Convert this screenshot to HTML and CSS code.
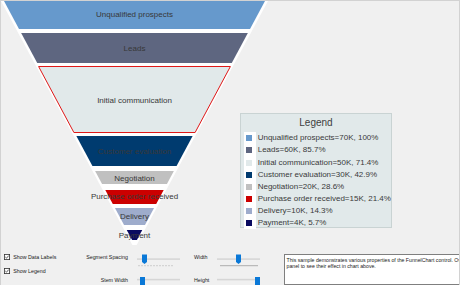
FILE: index.html
```html
<!DOCTYPE html>
<html>
<head>
<meta charset="utf-8">
<link rel="stylesheet" href="styles.css">
</head>
<body>
<div class="window">
  <div class="chart">
    <svg class="funnel" width="458" height="244" viewBox="1 1 458 244">
      <polygon points="1,1 268,1 134.5,249" fill="#ffffff"/>
      <polygon points="4,1 265,1 250,29 19,29" fill="#6699cc"/>
      <polygon points="21.15,33 247.85,33 231.77,63 37.23,63" fill="#5e6680"/>
      <polygon points="38.6,66.5 230.4,66.5 195.1,132.5 73.9,132.5" fill="#e1e9ea" stroke="#e01818" stroke-width="1"/>
      <polygon points="76.36,136 192.64,136 176.56,166 92.44,166" fill="#003b6f"/>
      <polygon points="95.12,171 173.88,171 166.91,184 102.09,184" fill="#c0c0c0"/>
      <polygon points="105.3,190 163.7,190 156.19,204 112.81,204" fill="#cc0000"/>
      <polygon points="114.95,208 154.05,208 144.94,225 124.06,225" fill="#9eaccc"/>
      <polygon points="126.74,230 142.26,230 136.9,240 132.1,240" fill="#0a0a60"/>
      <g class="seg-labels">
        <text x="134.5" y="17">Unqualified prospects</text>
        <text x="134.5" y="51">Leads</text>
        <text x="134.5" y="103">Initial communication</text>
        <text x="134.5" y="154">Customer evaluation</text>
        <text x="134.5" y="180.5">Negotiation</text>
        <text x="134.5" y="199">Purchase order received</text>
        <text x="134.5" y="219">Delivery</text>
        <text x="134.5" y="238">Payment</text>
      </g>
    </svg>
    <div class="legend">
      <div class="legend-title">Legend</div>
      <ul class="legend-list">
        <li class="legend-item"><span class="sw-cell"><span class="sw c1"></span></span><span class="legend-text">Unqualified prospects=70K, 100%</span></li>
        <li class="legend-item"><span class="sw-cell"><span class="sw c2"></span></span><span class="legend-text">Leads=60K, 85.7%</span></li>
        <li class="legend-item"><span class="sw-cell"><span class="sw c3"></span></span><span class="legend-text">Initial communication=50K, 71.4%</span></li>
        <li class="legend-item"><span class="sw-cell"><span class="sw c4"></span></span><span class="legend-text">Customer evaluation=30K, 42.9%</span></li>
        <li class="legend-item"><span class="sw-cell"><span class="sw c5"></span></span><span class="legend-text">Negotiation=20K, 28.6%</span></li>
        <li class="legend-item"><span class="sw-cell"><span class="sw c6"></span></span><span class="legend-text">Purchase order received=15K, 21.4%</span></li>
        <li class="legend-item"><span class="sw-cell"><span class="sw c7"></span></span><span class="legend-text">Delivery=10K, 14.3%</span></li>
        <li class="legend-item"><span class="sw-cell"><span class="sw c8"></span></span><span class="legend-text">Payment=4K, 5.7%</span></li>
      </ul>
    </div>
  </div>
  <div class="controls">
    <div class="checks">
      <label class="check">
        <svg class="box" width="6" height="6" viewBox="0 0 6 6"><rect x="0.4" y="0.4" width="5.2" height="5.2" fill="#fff" stroke="#333" stroke-width="0.8"/><path d="M1.3 3 L2.5 4.2 L4.7 1.6" fill="none" stroke="#333" stroke-width="0.8"/></svg>
        <span class="check-text">Show Data Labels</span>
      </label>
      <label class="check">
        <svg class="box" width="6" height="6" viewBox="0 0 6 6"><rect x="0.4" y="0.4" width="5.2" height="5.2" fill="#fff" stroke="#333" stroke-width="0.8"/><path d="M1.3 3 L2.5 4.2 L4.7 1.6" fill="none" stroke="#333" stroke-width="0.8"/></svg>
        <span class="check-text">Show Legend</span>
      </label>
    </div>
    <div class="ctl-label lbl-a r1">Segment Spacing</div>
    <svg class="slider s-a r1" width="43" height="13" viewBox="0 0 43 13">
      <rect x="0" y="4.3" width="43" height="1.6" fill="#d6d6d6"/>
      <line x1="1" y1="11.7" x2="36" y2="11.7" stroke="#c4c4c4" stroke-width="0.8" stroke-dasharray="2 1"/>
      <path d="M5 0.5 H10 V8 L7.5 10 L5 8 Z" fill="#0a78d7"/>
    </svg>
    <div class="ctl-label lbl-b r1">Width</div>
    <svg class="slider s-b r1" width="43" height="13" viewBox="0 0 43 13">
      <rect x="0" y="4.3" width="43" height="1.6" fill="#d6d6d6"/>
      <line x1="3" y1="11.7" x2="41" y2="11.7" stroke="#9c9c9c" stroke-width="0.8"/>
      <path d="M19 0.5 H24 V8 L21.5 10 L19 8 Z" fill="#0a78d7"/>
    </svg>
    <div class="ctl-label lbl-a r2">Stem Width</div>
    <svg class="slider-low s-a r2" width="43" height="8" viewBox="0 0 43 8">
      <rect x="0" y="1.8" width="43" height="1.6" fill="#d6d6d6"/>
      <rect x="3" y="0" width="5" height="8" fill="#0a78d7"/>
    </svg>
    <div class="ctl-label lbl-b r2">Height</div>
    <svg class="slider-low s-b r2" width="43" height="8" viewBox="0 0 43 8">
      <rect x="0" y="1.8" width="43" height="1.6" fill="#d6d6d6"/>
      <rect x="38" y="0" width="5" height="8" fill="#0a78d7"/>
    </svg>
    <div class="textbox">This sample demonstrates various properties of the FunnelChart control. Ov<br>panel to see their effect in chart above.</div>
  </div>
</div>
</body>
</html>
```
FILE: styles.css
```css
html, body {
  margin: 0;
  padding: 0;
  background: #f0f0f0;
}
body {
  font-family: "Liberation Sans", Arial, sans-serif;
}
.window {
  width: 460px;
  height: 285px;
  box-sizing: border-box;
  border: 1px solid #d2d2d2;
  border-bottom: none;
  background: #f0f0f0;
  display: flex;
  flex-direction: column;
  overflow: hidden;
}
.chart {
  height: 244px;
  flex: none;
  display: grid;
  grid-template-columns: 239px 152px 1fr;
  grid-template-rows: 112px 115px 1fr;
}
.funnel {
  grid-column: 1 / 4;
  grid-row: 1 / 4;
  display: block;
}
.seg-labels text {
  font-family: "Liberation Sans", Arial, sans-serif;
  font-size: 8px;
  fill: #383838;
  text-anchor: middle;
}
.legend {
  grid-column: 2;
  grid-row: 2;
  box-sizing: border-box;
  border: 1px solid #c9d3d3;
  background: #e1e9ea;
  display: flex;
  flex-direction: column;
}
.legend-title {
  height: 18.3px;
  line-height: 18px;
  text-align: center;
  font-size: 10px;
  color: #404040;
  flex: none;
}
.legend-list {
  list-style: none;
  margin: 0;
  padding: 0 0 0 3px;
}
.legend-item {
  display: flex;
  align-items: stretch;
  height: 12.14px;
}
.sw-cell {
  width: 12px;
  background: #ffffff;
  display: flex;
  align-items: center;
  flex: none;
}
.sw {
  width: 6px;
  height: 6px;
  margin-left: 2px;
}
.c1 { background: #6699cc; }
.c2 { background: #5e6680; }
.c3 { background: #e1e9ea; }
.c4 { background: #003b6f; }
.c5 { background: #c0c0c0; }
.c6 { background: #cc0000; }
.c7 { background: #9eaccc; }
.c8 { background: #0a0a60; }
.legend-text {
  font-size: 8px;
  line-height: 12.14px;
  color: #3a3a3a;
  padding-left: 1.7px;
  white-space: nowrap;
}
.controls {
  flex: 1;
  display: grid;
  grid-template-columns: 85px 51px 57px 23px 67px 1fr;
  grid-template-rows: 24px 1fr;
  font-size: 5.3px;
  color: #1a1a1a;
}
.checks {
  grid-column: 1;
  grid-row: 1 / 3;
  display: flex;
  flex-direction: column;
  gap: 7.7px;
  padding: 9.3px 0 0 3px;
}
.check {
  display: flex;
  align-items: center;
  height: 6px;
  gap: 3.3px;
}
.box {
  display: block;
  flex: none;
}
.check-text {
  line-height: 6px;
  white-space: nowrap;
}
.ctl-label {
  line-height: 7px;
  white-space: nowrap;
}
.lbl-a {
  grid-column: 2;
  text-align: right;
  padding-right: 9px;
}
.lbl-b {
  grid-column: 4;
}
.ctl-label.r1 {
  grid-row: 1;
  margin-top: 8.8px;
}
.ctl-label.r2 {
  grid-row: 2;
  margin-top: 7.5px;
}
.slider, .slider-low {
  display: block;
}
.s-a { grid-column: 3; }
.s-b { grid-column: 5; }
.slider.r1 {
  grid-row: 1;
  margin-top: 9px;
}
.slider-low.r2 {
  grid-row: 2;
  margin-top: 8px;
}
.textbox {
  grid-column: 6;
  grid-row: 1 / 3;
  margin-top: 9px;
  width: 200px;
  box-sizing: border-box;
  background: #ffffff;
  border: 1px solid #7f7f7f;
  padding: 2px 0 0 1.5px;
  font-size: 5.2px;
  line-height: 6px;
  color: #222;
  white-space: nowrap;
}
```
